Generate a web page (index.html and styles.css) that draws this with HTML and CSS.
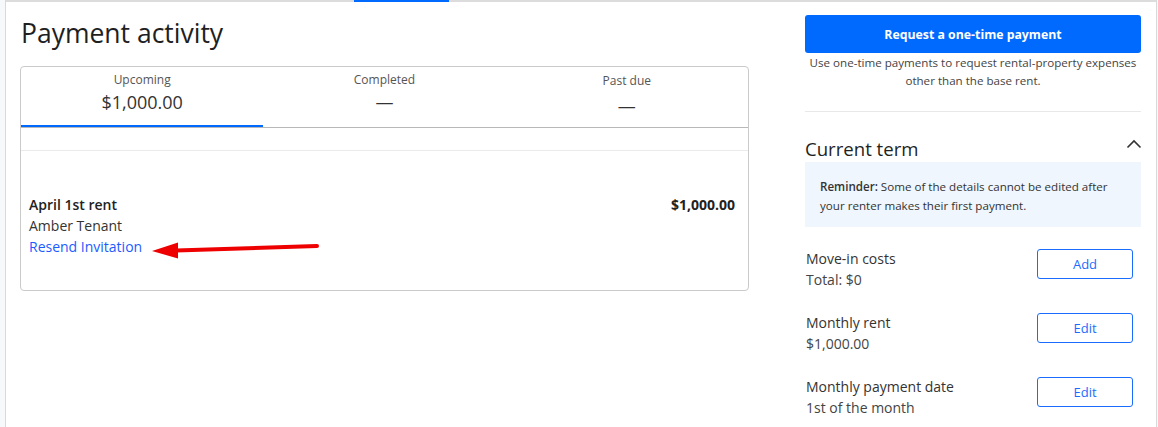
FILE: index.html
```html
<!DOCTYPE html>
<html lang="en">
<head>
<meta charset="utf-8">
<title>Payment activity</title>
<link rel="stylesheet" href="styles.css">
</head>
<body>
<div class="frame">
  <div class="topbar"><span class="topbar-active"></span></div>
  <div class="layout">
    <main class="main">
      <h1 class="page-title">Payment activity</h1>
      <section class="card">
        <div class="tabs">
          <div class="tab tab-active">
            <div class="tab-label">Upcoming</div>
            <div class="tab-value">$1,000.00</div>
          </div>
          <div class="tab">
            <div class="tab-label">Completed</div>
            <div class="tab-value">—</div>
          </div>
          <div class="tab tab-pastdue">
            <div class="tab-label">Past due</div>
            <div class="tab-value">—</div>
          </div>
        </div>
        <div class="card-spacer"></div>
        <div class="payment-row">
          <div class="payment-info">
            <div class="payment-title">April 1st rent</div>
            <div class="payment-tenant">Amber Tenant</div>
            <a class="payment-link" href="#">Resend Invitation</a>
          </div>
          <div class="payment-amount">$1,000.00</div>
          <svg class="annotation-arrow" width="180" height="24" viewBox="0 0 180 24" aria-hidden="true">
            <path d="M24 13.5 L165 9" stroke="#ee0000" stroke-width="4" stroke-linecap="round" fill="none"/>
            <path d="M0 14 L26 5.5 L26 21.5 Z" fill="#ee0000"/>
          </svg>
        </div>
      </section>
    </main>
    <aside class="side">
      <button class="btn-primary" type="button">Request a one-time payment</button>
      <p class="side-note">Use one-time payments to request rental-property expenses other than the base rent.</p>
      <hr class="side-divider">
      <div class="term-head">
        <h2 class="term-title">Current term</h2>
        <svg class="chevron" width="16" height="10" viewBox="0 0 16 10" aria-hidden="true">
          <path d="M1.5 8.5 L8 2 L14.5 8.5" stroke="#333" stroke-width="1.6" fill="none"/>
        </svg>
      </div>
      <div class="reminder"><strong>Reminder:</strong> Some of the details cannot be edited after your renter makes their first payment.</div>
      <div class="term-list">
        <div class="term-item">
          <div class="term-text">
            <div class="term-name">Move-in costs</div>
            <div class="term-value">Total: $0</div>
          </div>
          <button class="btn-outline" type="button">Add</button>
        </div>
        <div class="term-item">
          <div class="term-text">
            <div class="term-name">Monthly rent</div>
            <div class="term-value">$1,000.00</div>
          </div>
          <button class="btn-outline" type="button">Edit</button>
        </div>
        <div class="term-item">
          <div class="term-text">
            <div class="term-name">Monthly payment date</div>
            <div class="term-value">1st of the month</div>
          </div>
          <button class="btn-outline" type="button">Edit</button>
        </div>
      </div>
    </aside>
  </div>
</div>
</body>
</html>
```

FILE: styles.css
```css
* { box-sizing: border-box; }

html, body {
  margin: 0;
  padding: 0;
}

body {
  background: #f7f8fa;
  font-family: "Open Sans", "Noto Sans", Arial, sans-serif;
  color: #2e2e2e;
  width: 1158px;
}

.frame {
  margin-left: 5px;
  margin-right: 1px;
  background: #ffffff;
  border-left: 1px solid #d9d9d9;
  border-right: 1px solid #d9d9d9;
  min-height: 427px;
}

.topbar {
  height: 2px;
  background: #dcdcdc;
  display: flex;
}

.topbar-active {
  width: 95px;
  height: 2px;
  margin-left: 348px;
  background: #006aff;
}

.layout {
  display: flex;
  gap: 56px;
  padding: 13px 15px 0 14px;
}

.main {
  width: 729px;
  flex: none;
}

.page-title {
  margin: 0 0 15px 0;
  font-size: 26.5px;
  line-height: 36px;
  font-weight: 500;
  color: #1f1f1f;
  padding-left: 1px;
}

.card {
  border: 1px solid #cacaca;
  border-radius: 4px;
  height: 225px;
}

.tabs {
  display: grid;
  grid-template-columns: 1fr 1fr 1fr;
  border-bottom: 1px solid #b8b8b8;
}

.tab {
  text-align: center;
  padding: 5px 0 12px;
  height: 60px;
}

.tab-active {
  border-bottom: 2px solid #006aff;
  margin-bottom: -1px;
  height: 60px;
}

.tab-label {
  font-size: 12px;
  line-height: 16px;
  color: #555;
}

.tab-value {
  margin-top: 2px;
  font-size: 18px;
  line-height: 24px;
  color: #333;
}

.tab-pastdue .tab-label { padding-top: 1px; }
.tab-pastdue .tab-value { padding-top: 3px; }

.card-spacer {
  height: 23px;
  border-bottom: 1px solid #ebebeb;
}

.payment-row {
  position: relative;
  display: flex;
  justify-content: space-between;
  align-items: flex-start;
  padding: 43px 13px 0 8px;
  font-size: 14px;
  line-height: 21px;
}

.payment-title {
  font-weight: 600;
  color: #222;
}

.payment-tenant {
  color: #333;
}

.payment-link {
  color: #1a5cff;
  text-decoration: none;
}

.payment-amount {
  font-weight: 700;
  color: #222;
}

.annotation-arrow {
  position: absolute;
  left: 131px;
  top: 86px;
}

.side {
  width: 336px;
  flex: none;
}

.btn-primary {
  display: block;
  width: 100%;
  height: 38px;
  border: none;
  border-radius: 3px;
  background: #006aff;
  color: #fff;
  font-family: inherit;
  font-size: 12.3px;
  font-weight: 700;
  cursor: pointer;
}

.side-note {
  margin: 1px -2px 0;
  text-align: center;
  font-size: 11.6px;
  line-height: 18px;
  color: #444;
}

.side-divider {
  margin: 21px 0 0;
  border: none;
  border-top: 1px solid #e8e8e8;
  height: 0;
}

.term-head {
  display: flex;
  justify-content: space-between;
  align-items: flex-start;
  margin-top: 25px;
}

.term-title {
  margin: 0 0 1px;
  font-size: 18.6px;
  line-height: 24px;
  font-weight: 500;
  color: #1f1f1f;
}

.chevron {
  margin-top: 2px;
  margin-right: -1px;
}

.reminder {
  background: #eff6fd;
  padding: 15px 15px 12px;
  font-size: 11.6px;
  line-height: 19px;
  color: #333;
}

.reminder strong {
  font-weight: 600;
}

.term-list {
  display: flex;
  flex-direction: column;
  gap: 22px;
  margin-top: 21px;
}

.term-item {
  display: flex;
  justify-content: space-between;
  align-items: flex-start;
  padding-left: 1px;
  padding-right: 8px;
}

.term-name {
  font-size: 14px;
  line-height: 21px;
  color: #333;
}

.term-value {
  font-size: 14px;
  line-height: 21px;
  color: #444;
}

.btn-outline {
  width: 96px;
  height: 30px;
  margin-top: 1px;
  border: 1px solid #1a6cff;
  border-radius: 3px;
  background: #fff;
  color: #1a6cff;
  font-family: inherit;
  font-size: 13px;
  cursor: pointer;
}
```
